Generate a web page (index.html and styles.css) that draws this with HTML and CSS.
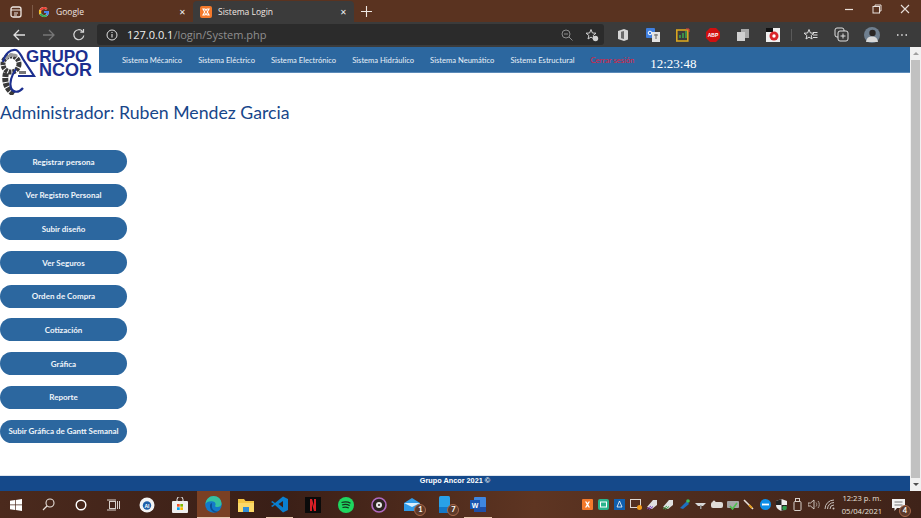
FILE: index.html
```html
<!DOCTYPE html>
<html lang="en">
<head>
    <meta charset="UTF-8">
    <meta name="viewport" content="width=device-width, initial-scale=1.0">
    <title>Sistema Login</title>
    <link rel="stylesheet" href="styles.css">
</head>
<body>
    <div class="tabstrip">
        <div class="tabActions">
            <svg width="12" height="12" viewBox="0 0 12 12"><rect x="1" y="1" width="10" height="10" rx="2" fill="none" stroke="#f0e8e2" stroke-width="1.3"/><path d="M1 4h10M4 7h4M4 9h3" stroke="#f0e8e2" stroke-width="1.2"/></svg>
        </div>
        <div class="tab">
            <svg class="favicon" width="12" height="12" viewBox="0 0 12 12"><path d="M10.800 6.200c0 2.900-2 4.800-4.800 4.800A5 5 0 1 1 9.400 2.400L8 3.800A3 3 0 0 0 6 3a3 3 0 0 0 0 6c1.600 0 2.500-.9 2.800-2.100H6V5.100h4.700z" fill="#fff"/><path d="M1.500 3.800 3.200 5A3 3 0 0 1 8 3.800l1.400-1.400A5 5 0 0 0 1.500 3.800z" fill="#ea4335"/><path d="M1.500 8.300 3.200 7A3 3 0 0 0 8 8.500L9.500 9.700A5 5 0 0 1 1.500 8.300z" fill="#34a853"/><path d="M10.800 5.100H6v1.800h2.800A2.500 2.500 0 0 1 8 8.500l1.500 1.200c.9-.9 1.300-2.100 1.300-3.500z" fill="#4285f4"/><path d="M1.500 3.800a5 5 0 0 0 0 4.500L3.200 7a3 3 0 0 1 0-2z" fill="#fbbc05"/></svg>
            <span class="tabTitle">Google</span>
            <span class="tabClose">✕</span>
        </div>
        <div class="tab tabActive">
            <svg class="favicon" width="12" height="12" viewBox="0 0 12 12"><rect width="12" height="12" rx="2" fill="#f4792b"/><path d="M3 3h2l1 1.500L7 3h2L7.300 6 9 9H7L6 7.500 5 9H3l1.700-3z" fill="none" stroke="#fff" stroke-width="1.100"/></svg>
            <span class="tabTitle">Sistema Login</span>
            <span class="tabClose">✕</span>
        </div>
        <svg class="newTab" width="11" height="11" viewBox="0 0 11 11"><path d="M5.500 0v11M0 5.500h11" stroke="#f0e8e2" stroke-width="1.100"/></svg>
        <div class="windowButtons">
            <svg width="10" height="10" viewBox="0 0 10 10"><path d="M1 5.500h8" stroke="#e8e0da" stroke-width="1.200"/></svg>
            <svg width="10" height="10" viewBox="0 0 10 10"><rect x="1" y="2.500" width="6.500" height="6.500" fill="none" stroke="#e8e0da"/><path d="M3 2.500V1h6v6H7.500" fill="none" stroke="#e8e0da"/></svg>
            <svg width="10" height="10" viewBox="0 0 10 10"><path d="M1 1l8 8M9 1l-8 8" stroke="#e8e0da" stroke-width="1.100"/></svg>
        </div>
    </div>

    <div class="toolbar">
        <div class="navButtons">
            <svg width="14" height="14" viewBox="0 0 14 14"><path d="M13 7H2M7 2 2 7l5 5" fill="none" stroke="#e0e0e0" stroke-width="1.300"/></svg>
            <svg width="14" height="14" viewBox="0 0 14 14"><path d="M1 7h11M7 2l5 5-5 5" fill="none" stroke="#777" stroke-width="1.300"/></svg>
            <svg width="14" height="14" viewBox="0 0 14 14"><path d="M11.800 7.500A5 5 0 1 1 10.500 3.300M11.500 1v3.200H8.300" fill="none" stroke="#d8d8d8" stroke-width="1.200"/></svg>
        </div>
        <div class="addressBar">
            <svg width="12" height="12" viewBox="0 0 12 12"><circle cx="6" cy="6" r="5" fill="none" stroke="#e0e0e0"/><path d="M6 5v3.500M6 3v1.100" stroke="#e0e0e0" stroke-width="1.100"/></svg>
            <span class="url"><span class="urlHost">127.0.0.1</span>/login/System.php</span>
            <svg class="addressZoom" width="12" height="12" viewBox="0 0 12 12"><circle cx="5" cy="5" r="4" fill="none" stroke="#8c8c8c"/><path d="M8 8l3.500 3.500M3 5h4" stroke="#8c8c8c"/></svg>
            <svg class="addressStar" width="14" height="14" viewBox="0 0 14 14"><path d="M6 1.500 7.400 5l3.600.2-2.800 2.300.9 3.500L6 9.100 3 11l.9-3.500L1 5.200 4.600 5z" fill="none" stroke="#d0d0d0"/><circle cx="10.500" cy="10.500" r="2.700" fill="#d0d0d0"/></svg>
        </div>
        <div class="extensions">
            <svg width="14" height="14" viewBox="-1 0 14 14"><path d="M1 3 7 1l4 1.500v9L7 13l-6-2z" fill="#d5d5d5"/><path d="M7 3 4 3.800v6.400L7 11z" fill="#6a6a6a"/></svg>
            <svg width="14" height="14" viewBox="0 0 14 14"><rect width="9" height="10" rx="1" fill="#3f7fe0"/><rect x="6" y="4" width="8" height="10" fill="#e4e4e4"/><path d="M8 7h4M10 6v5" stroke="#666"/><circle cx="4" cy="5" r="1.800" fill="none" stroke="#fff"/></svg>
            <svg width="14" height="14" viewBox="0 0 14 14"><rect x=".8" y="2" width="11" height="11" fill="none" stroke="#d9a520" stroke-width="1.600"/><path d="M4 10V7M7 10V5M10 10V3" stroke-width="1.600" stroke="#3fa34d"/><path d="M10 1h3v3" stroke="#e04040" fill="none"/></svg>
            <svg width="14" height="14" viewBox="0 0 14 14"><path d="M4 0h6l4 4v6l-4 4H4l-4-4V4z" fill="#d00f0f"/><text x="7" y="9" class="abpText">ABP</text></svg>
            <svg width="14" height="14" viewBox="0 0 14 14"><rect x="5" y="1" width="8" height="9" fill="#a8a8a8"/><rect x="1" y="4" width="8" height="9" fill="#d0d0d0"/></svg>
            <svg width="14" height="14" viewBox="0 0 14 14"><rect width="14" height="14" fill="#f0f0f0"/><path d="M0 0h7v4H0z" fill="#111"/><circle cx="8" cy="8" r="4.500" fill="#d9252a"/><circle cx="8" cy="8" r="1.700" fill="#fff"/></svg>
            <span class="toolbarSep"></span>
            <svg width="15" height="14" viewBox="0 0 15 14"><path d="M6 1.500 7.400 5l3.400.2L8.200 7.500l.9 3.500L6 9.100 3 11l.9-3.500L1 5.200 4.600 5zM10 7h4.500M10 9.500h4.500M10 4.500h4.500" fill="none" stroke="#e0e0e0"/></svg>
            <svg width="15" height="15" viewBox="0 0 15 15"><rect x="1" y="1" width="9" height="9" rx="2" fill="none" stroke="#e0e0e0"/><rect x="4" y="4" width="10" height="10" rx="2" fill="#3b3b3b" stroke="#e0e0e0"/><path d="M9 6.500v5M6.500 9h5" stroke="#e0e0e0"/></svg>
            <svg class="avatar" width="16" height="16" viewBox="0 0 16 16"><circle cx="8" cy="8" r="8" fill="#6f7f8f"/><circle cx="8.500" cy="6" r="3.200" fill="#2a2624"/><path d="M2 15c1-5 3-5.500 6-5.500s5 .5 6 5.500z" fill="#d8d8d8"/></svg>
            <svg width="12" height="4" viewBox="0 0 12 4"><path d="M1 2h1.500M5.200 2h1.500M9.500 2H11" stroke="#e8e8e8" stroke-width="1.500"/></svg>
        </div>
    </div>

    <div class="window">
        <div class="page">
            <div class="header">
                <svg class="logo" width="98" height="48" viewBox="0 0 98 48">
                    <circle cx="11" cy="17" r="8" fill="none" stroke="#3a3a3a" stroke-width="5" stroke-dasharray="3 1"/>
                    <path d="M6 26c-2 8 0 16 8 21" fill="none" stroke="#3a3a3a" stroke-width="6" stroke-dasharray="4 1"/>
                    <path d="M6 12c2-4 7-5 11-3" fill="none" stroke="#9a9a9a" stroke-width="3"/>
                    <path d="M3 15C5 6 11 2 16 3c3 1 5 5 7 9l11 17H18" fill="none" stroke="#1c2f8f" stroke-width="2.200"/>
                    <path d="M16 22c-4 6-7 13-5 19 2 5 8 5 12 0" fill="none" stroke="#1c2f8f" stroke-width="2.200"/>
                    <rect x="19" y="24" width="7" height="3" fill="#777"/>
                    <text class="logoText"><tspan x="26" y="15" class="logoTop">GRUPO</tspan><tspan x="39" y="29">NCOR</tspan></text>
                </svg>
                <nav class="nav">
                    <a href="#">Sistema Mécanico</a>
                    <a href="#">Sistema Eléctrico</a>
                    <a href="#">Sistema Electrónico</a>
                    <a href="#">Sistema Hidráulico</a>
                    <a href="#">Sistema Neumático</a>
                    <a href="#">Sistema Estructural</a>
                    <a href="#" class="logoutLink">Cerrar sesión</a>
                    <span class="clock">12:23:48</span>
                </nav>
            </div>

            <h2 class="adminTitle">Administrador: Ruben Mendez Garcia</h2>

            <div class="menu">
                <button>Registrar persona</button>
                <button>Ver Registro Personal</button>
                <button>Subir diseño</button>
                <button>Ver Seguros</button>
                <button>Orden de Compra</button>
                <button>Cotización</button>
                <button>Gráfica</button>
                <button>Reporte</button>
                <button>Subir Gráfica de Gantt Semanal</button>
            </div>

            <footer class="pageFooter">Grupo Ancor 2021 ©</footer>
        </div>
        <div class="scrollbar">
            <span class="arrowUp"></span>
            <span class="thumb"></span>
            <span class="arrowDown"></span>
        </div>
    </div>

    <div class="taskbar">
        <div class="winButtons">
            <span class="taskItem"><svg width="12" height="12" viewBox="0 0 12 12"><path d="M0 1.700 5 1v4.600H0zM5.700.9 12 0v5.600H5.700zM0 6.300h5v4.700l-5-.7zM5.700 6.300H12V12l-6.300-.9z" fill="#fff"/></svg></span>
            <span class="taskItem"><svg width="13" height="13" viewBox="0 0 13 13"><circle cx="8" cy="5" r="4" fill="none" stroke="#e8e0da" stroke-width="1.100"/><path d="M5 8 1 12" stroke="#e8e0da" stroke-width="1.200"/></svg></span>
            <span class="taskItem"><svg width="12" height="12" viewBox="0 0 12 12"><circle cx="6" cy="6" r="4.800" fill="none" stroke="#fff" stroke-width="1.400"/></svg></span>
            <span class="taskItem"><svg width="13" height="12" viewBox="0 0 13 12"><rect x="2.500" y="2.500" width="6" height="7" fill="none" stroke="#d8d0ca"/><path d="M0 1h9M0 11h9M10.500 2v8M12.500 2v8" stroke="#d8d0ca"/></svg></span>
        </div>
        <div class="appButtons">
            <span class="taskItem"><svg width="16" height="16" viewBox="0 0 16 16"><circle cx="8" cy="8" r="7.500" fill="#f4f4f4"/><circle cx="8" cy="8.500" r="4.200" fill="#1f5fa8"/><text x="8" y="10.500" class="miniText">AI</text></svg></span>
            <span class="taskItem"><svg width="16" height="16" viewBox="0 0 16 16"><path d="M5 4V2.500a3 3 0 0 1 6 0V4" fill="none" stroke="#eee"/><rect y="4" width="16" height="12" rx="1" fill="#efefef"/><rect x="5" y="7" width="2.700" height="2.700" fill="#f25022"/><rect x="8.300" y="7" width="2.700" height="2.700" fill="#7fba00"/><rect x="5" y="10.300" width="2.700" height="2.700" fill="#00a4ef"/><rect x="8.300" y="10.300" width="2.700" height="2.700" fill="#ffb900"/></svg></span>
            <span class="taskItem taskActive"><svg width="17" height="17" viewBox="0 0 17 17"><circle cx="8.500" cy="8.500" r="8.300" fill="#1479c9"/><path d="M.5 8C1 3 4.500 0 8.500 0c4.500 0 8 3 8 7.500 0 2.500-2 3.500-4 3.500-1.500 0-2.500-.5-2.500-1 1-1 1-4-2-4.500C5 5 2 5.500.5 8z" fill="#35c1a0"/><path d="M7 7c-2.500.5-3 5 0 8 1.500 1.500 4 2 6 .5-2.500.5-5.500-1.500-6-4-.2-1.500 0-3 0-4.500z" fill="#0c4f95"/></svg></span>
            <span class="taskItem"><svg width="16" height="14" viewBox="0 0 16 14"><path d="M0 1h6l1.500 2H16v11H0z" fill="#f4c542"/><rect y="5" width="16" height="9" fill="#fbd968"/><rect x="5" y="9" width="6" height="5" fill="#2f8ed8"/></svg></span>
            <span class="taskItem taskOpen"><svg width="17" height="17" viewBox="0 0 17 17"><path d="M12 .5 17 3v11l-5 2.500L4 9l-2.500 2L0 10l3-2-3-2 1.500-1L4 7zM12 5 7.500 8l4.500 3.500z" fill="#0a7fd0"/></svg></span>
            <span class="taskItem"><svg width="16" height="16" viewBox="0 0 16 16"><rect width="16" height="16" fill="#0a0a0a"/><path d="M5 2h2l2 7V2h2v12H9L7 7v7H5z" fill="#d81f26"/></svg></span>
            <span class="taskItem"><svg width="16" height="16" viewBox="0 0 16 16"><circle cx="8" cy="8" r="8" fill="#1ed760"/><path d="M3.500 5.500c3-1 6.500-.8 9 .7M4 8c2.500-.8 5.500-.6 7.700.6M4.500 10.500c2-.6 4.500-.5 6.300.5" fill="none" stroke="#16331f" stroke-width="1.300"/></svg></span>
            <span class="taskItem"><svg width="16" height="16" viewBox="0 0 16 16"><circle cx="8" cy="8" r="7" fill="#2b2320" stroke="#b06bc0" stroke-width="1.600"/><circle cx="8" cy="8" r="3" fill="#e8e8e8"/><circle cx="8" cy="8" r="1" fill="#2b2320"/></svg></span>
            <span class="taskItem"><svg width="16" height="13" viewBox="0 0 16 13"><path d="M0 5 8 0l8 5v8H0z" fill="#2f9be8"/><path d="M0 5l8 4 8-4" fill="#d8eefc"/></svg><span class="badge">1</span></span>
            <span class="taskItem"><svg width="11" height="17" viewBox="0 0 11 17"><rect width="11" height="17" rx="1.500" fill="#29a1e8"/><rect y="11" width="11" height="6" fill="#1478c8"/></svg><span class="badge">7</span></span>
            <span class="taskItem taskOpen"><svg width="16" height="15" viewBox="0 0 16 15"><rect x="4" width="12" height="15" rx="1" fill="#3e86e0"/><rect x="4" y="10" width="12" height="5" fill="#1d4fa8"/><rect y="3" width="10" height="9" fill="#1a56b0"/><text x="5" y="10.500" class="wordText">W</text></svg></span>
        </div>

        <div class="tray">
            <svg width="11" height="11" viewBox="0 0 11 11"><rect width="11" height="11" rx="1" fill="#f4792b"/><path d="M3 2.500h1.500l1 1.500 1-1.500H8L6.300 5.500 8 8.500H6.500l-1-1.500-1 1.500H3l1.700-3z" fill="#fff"/></svg>
            <svg width="11" height="11" viewBox="0 0 11 11"><rect width="11" height="11" rx="2" fill="#29b48c"/><rect x="2.500" y="3" width="6" height="5" fill="none" stroke="#fff"/></svg>
            <svg width="11" height="11" viewBox="0 0 11 11"><rect width="11" height="11" fill="#0f5fae"/><path d="M5.500 2 8 8H3z" fill="none" stroke="#fff" stroke-width=".8"/></svg>
            <svg width="12" height="11" viewBox="0 0 12 11"><rect x=".5" y=".5" width="10" height="8" fill="none" stroke="#e0d8d2"/><circle cx="9.500" cy="8.500" r="2.500" fill="#f49b1a"/></svg>
            <svg width="12" height="11" viewBox="0 0 12 11"><path d="M1 8 7 1h4v5l-5 4z" fill="#e0e0e0"/><path d="M1 10l4-3M3 10.500l4-3" stroke="#7a3fc0"/></svg>
            <svg width="12" height="11" viewBox="0 0 12 11"><path d="M1 8 7 1h4v5l-5 4z" fill="#e0e0e0"/><path d="M1 10l4-3M3 10.500l4-3" stroke="#3fa04d"/></svg>
            <svg width="11" height="11" viewBox="0 0 11 11"><path d="M1 9 8 2 10 5 4 10z" fill="#1e6fc0"/><circle cx="9" cy="2" r="1.800" fill="#3fbf5f"/></svg>
            <svg width="11" height="9" viewBox="0 0 11 9"><path d="M0 3h11L8 6H3z" fill="#d8d8d8"/><rect x="5" y="5" width="1.500" height="4" fill="#999"/></svg>
            <svg width="12" height="9" viewBox="0 0 12 9"><rect y="2" width="12" height="6" rx="2" fill="#e0dcd8"/><circle cx="3" cy="2" r="1.500" fill="#e0dcd8"/></svg>
            <svg width="12" height="10" viewBox="0 0 12 10"><rect y="1" width="12" height="7" rx="1" fill="#a8a8a8"/><path d="M3 6l2.500 3L10 3" fill="none" stroke="#4fc04f" stroke-width="1.600"/></svg>
            <svg width="11" height="11" viewBox="0 0 11 11"><path d="M1 1l9 9" stroke="#e8e0da" stroke-width="1.600"/><path d="M6 6l3 3" stroke="#e6a020" stroke-width="2"/></svg>
            <svg width="11" height="11" viewBox="0 0 11 11"><circle cx="5.500" cy="5.500" r="5.500" fill="#0e8fe8"/><path d="M2 5.500h7" stroke="#fff" stroke-width="1.800"/></svg>
            <svg width="11" height="12" viewBox="0 0 11 12"><path d="M5.500 0 11 2v4c0 3-2.500 5-5.500 6C2.500 11 0 9 0 6V2z" fill="#eee"/><path d="M5.500 0v6H0V2zM5.500 6H11c0 3-2.500 5-5.500 6z" fill="#222"/><circle cx="8.500" cy="9" r="2.300" fill="#2f9f4f"/></svg>
            <svg width="9" height="13" viewBox="0 0 9 13"><rect x="1" y="3.500" width="7" height="9" rx="1" fill="none" stroke="#d8d0ca"/><rect x="2.500" y=".5" width="4" height="3" fill="none" stroke="#d8d0ca"/></svg>
            <svg width="12" height="11" viewBox="0 0 12 11"><path d="M0 4h2.500L6 1v9L2.500 7H0z" fill="none" stroke="#d8d0ca" stroke-width=".9"/><path d="M8 3.500c1 1 1 3 0 4M10 2c1.700 1.800 1.700 5.200 0 7" fill="none" stroke="#a89c94"/></svg>
            <svg width="12" height="11" viewBox="0 0 12 11"><path d="M1 10a9 9 0 0 1 9-9M3.500 10A6.500 6.500 0 0 1 10 3.500M6 10a4 4 0 0 1 4-4" fill="none" stroke="#c8c0ba"/><circle cx="9.500" cy="9.500" r="1" fill="#c8c0ba"/></svg>
        </div>
        <div class="dateTime">
            <span>12:23 p. m.</span>
            <span>05/04/2021</span>
        </div>
        <span class="notifyButton">
            <svg width="13" height="12" viewBox="0 0 13 12"><path d="M0 0h13v9H5l-2.500 3V9H0z" fill="#f2f2f2"/><path d="M2.500 3h8M2.500 6h8" stroke="#777"/></svg>
            <span class="badge">4</span>
        </span>
    </div>
</body>
</html>
```

FILE: styles.css
```css
* {
    box-sizing: border-box;
    margin: 0;
    padding: 0;
}

html, body {
    height: 100%;
    overflow: hidden;
}

body {
    display: flex;
    flex-direction: column;
    font-family: Lato, "Open Sans", sans-serif;
    background-color: white;
}

svg {
    display: block;
    flex-shrink: 0;
}

/* browser top */
.tabstrip {
    height: 22px;
    display: flex;
    align-items: flex-end;
    background-color: #5a3320;
}

.tabActions {
    width: 33px;
    height: 13px;
    margin-bottom: 4px;
    display: flex;
    align-items: center;
    justify-content: center;
    border-right: 1px solid #7c5a48;
}

.tab {
    width: 160px;
    height: 21px;
    display: flex;
    align-items: center;
    padding: 0 7px 0 5px;
    gap: 6px;
    color: #f0e6e0;
    font-family: "Open Sans", sans-serif;
}

.tabActive {
    width: 161px;
    padding: 0 7px 0 7px;
    background-color: #3b3b3b;
    border-radius: 4px 4px 0 0;
}

.tabTitle {
    flex: 1;
    font-size: 8.5px;
}

.tabClose {
    font-size: 8px;
    color: #eee;
}

.newTab {
    margin: 0 0 5px 7px;
}

.windowButtons {
    margin-left: auto;
    height: 22px;
    width: 94px;
    display: flex;
    align-items: center;
    justify-content: space-between;
    padding: 0 11px 4px 17px;
}

.toolbar {
    height: 25px;
    display: flex;
    align-items: center;
    background-color: #3b3b3b;
}

.navButtons {
    width: 97px;
    display: flex;
    align-items: center;
    gap: 16px;
    padding-left: 12px;
}

.addressBar {
    width: 507px;
    height: 21px;
    display: flex;
    align-items: center;
    background-color: #2b2b2b;
    border-radius: 3px;
    padding: 0 5px 0 9px;
}

.url {
    margin-left: 9px;
    font-family: "Open Sans", sans-serif;
    font-size: 11px;
    color: #8f8f8f;
}

.urlHost {
    color: #f0f0f0;
}

.addressZoom {
    margin-left: auto;
}

.addressStar {
    margin-left: 12px;
}

.extensions {
    flex: 1;
    display: flex;
    align-items: center;
    gap: 16px;
    padding-left: 12px;
}

.toolbarSep {
    width: 1px;
    height: 12px;
    margin: 0 -5px;
    background-color: #5a5a5a;
}

.abpText {
    font-family: "Liberation Sans", sans-serif;
    font-size: 5px;
    font-weight: bold;
    fill: white;
    text-anchor: middle;
}

.avatar {
    margin-left: -1px;
}

/* page */
.window {
    flex: 1;
    display: flex;
    min-height: 0;
}

.page {
    flex: 1;
    display: flex;
    flex-direction: column;
}

.header {
    display: flex;
    align-items: flex-start;
    height: 48px;
}

.logo {
    width: 98px;
    margin-right: 1px;
}

.logoText {
    font-family: "Liberation Sans", sans-serif;
    font-size: 18px;
    font-weight: bold;
    fill: #1c2f8f;
}

.logoTop {
    font-size: 17px;
}

.nav {
    flex: 1;
    height: 26px;
    display: flex;
    align-items: center;
    padding: 1px 0 0 23px;
    gap: 16px;
    background-color: #2c679f;
    border-bottom: 1px solid #5b8ab8;
}

.nav a {
    color: #e8f0f8;
    font-size: 7.6px;
    text-decoration: none;
}

.nav .logoutLink {
    color: #e02040;
}

.clock {
    font-family: "Liberation Serif", serif;
    font-size: 13px;
    color: white;
    margin: 7px 0 0 0;
}

.adminTitle {
    margin-top: 6px;
    height: 24px;
    font-family: Lato, sans-serif;
    font-size: 17.7px;
    font-weight: normal;
    line-height: 24px;
    color: #17468a;
}

.menu {
    display: flex;
    flex-direction: column;
    gap: 10.7px;
    width: 127px;
    margin-top: 25px;
}

.menu button {
    height: 23px;
    font-family: Lato, sans-serif;
    font-size: 8px;
    font-weight: bold;
    color: #f0f5fa;
    background-color: #2c679f;
    border: none;
    border-radius: 12px;
}

.pageFooter {
    margin-top: auto;
    height: 16px;
    line-height: 10px;
    text-align: center;
    font-family: "Liberation Sans", sans-serif;
    font-size: 7.3px;
    font-weight: bold;
    color: white;
    background-color: #15498a;
    border-top: 1px solid #dfe6ee;
}

.scrollbar {
    width: 11px;
    display: flex;
    flex-direction: column;
    align-items: center;
    background-color: #f1f1f1;
}

.arrowUp {
    margin: 5px 0;
    border-left: 3px solid transparent;
    border-right: 3px solid transparent;
    border-bottom: 3px solid #a0a0a0;
}

.thumb {
    flex: 1;
    width: 9px;
    background-color: #c1c1c1;
}

.arrowDown {
    margin: 5px 0;
    border-left: 3px solid transparent;
    border-right: 3px solid transparent;
    border-top: 3px solid #505050;
}

/* windows taskbar */
.taskbar {
    height: 27px;
    display: flex;
    align-items: center;
    background: linear-gradient(90deg, #4b2a1d 0%, #3a1f17 30%, #4d2a1c 45%, #5e3522 58%, #4e2c1e 75%, #3f2319 100%);
}

.winButtons, .appButtons {
    display: flex;
    height: 100%;
}

.winButtons .taskItem {
    width: 32.5px;
}

.appButtons {
    margin-left: .5px;
}

.taskItem {
    width: 33.1px;
    height: 100%;
    position: relative;
    display: flex;
    align-items: center;
    justify-content: center;
}

.taskActive {
    background-color: #7a4024;
    border-bottom: 1px solid #e8c8b0;
}

.taskOpen::after {
    content: "";
    position: absolute;
    left: 3px;
    right: 3px;
    bottom: 0;
    height: 1px;
    background-color: #e8c8b0;
}

.badge {
    position: absolute;
    right: 2px;
    bottom: 2px;
    width: 12px;
    height: 12px;
    border-radius: 50%;
    font-size: 7.5px;
    font-weight: bold;
    line-height: 10px;
    text-align: center;
    color: white;
    background-color: #5e3a2a;
    border: 1px solid #a8684a;
}

.miniText {
    font-family: "Liberation Sans", sans-serif;
    font-size: 5px;
    font-weight: bold;
    fill: white;
    text-anchor: middle;
}

.wordText {
    font-family: "Liberation Sans", sans-serif;
    font-size: 7px;
    font-weight: bold;
    fill: white;
    text-anchor: middle;
}

.tray {
    margin-left: 84.4px;
    display: grid;
    grid-template-columns: repeat(16, 16.2px);
    align-items: center;
    justify-items: center;
}

.dateTime {
    width: 48px;
    display: flex;
    flex-direction: column;
    gap: 3px;
    align-items: center;
    font-family: "Open Sans", sans-serif;
    font-size: 7.6px;
    line-height: 10px;
    white-space: nowrap;
    color: #e8e0da;
}

.notifyButton {
    position: relative;
    width: 26px;
    height: 100%;
    display: flex;
    align-items: center;
    justify-content: center;
}

.notifyButton .badge {
    right: 1px;
    bottom: 1px;
}
```
